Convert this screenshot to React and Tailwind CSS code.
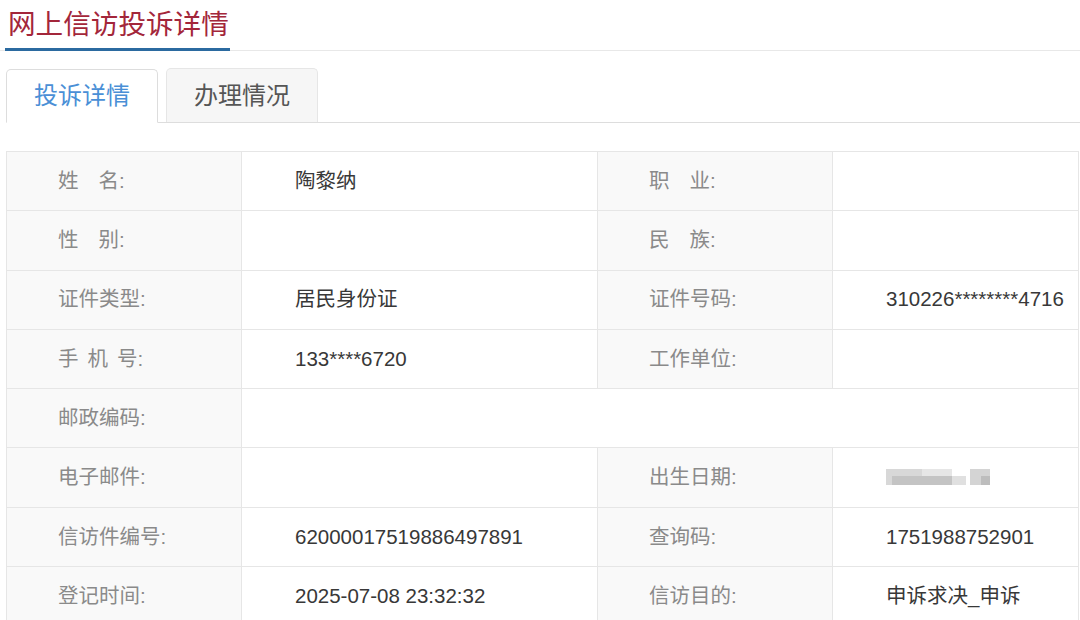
import React from "react";

const font = { fontFamily: '"Liberation Sans", "Noto Sans CJK SC", sans-serif' };

function Label({ children }) {
  return <span className="text-[#8a8a8a]">{children}</span>;
}

function Spaced({ chars, gap }) {
  return (
    <span className="text-[#8a8a8a]">
      {chars.map((c, i) => (
        <span key={i} className={i < chars.length - 1 ? gap : ""}>
          {c}
        </span>
      ))}
      :
    </span>
  );
}

const labelTd = "bg-[#f9f9f9] border border-[#e6e6e6] pl-[51px] text-[20.5px] align-middle";
const valueTd = "bg-white border border-[#e6e6e6] pl-[53px] text-[20.5px] text-[#383838] align-middle";

export default function App() {
  return (
    <div className="w-[1080px] h-[620px] overflow-hidden bg-white" style={font}>
      {/* Title */}
      <div className="flex items-end border-b border-[#e8e8e8] h-[51px]">
        <div className="ml-[5px] w-[225px] border-b-[3px] border-[#2b6aa0] -mb-[1px] pb-[5px] pl-[3px] text-[27.6px] leading-[36px] text-[#a3263a] whitespace-nowrap">
          网上信访投诉详情
        </div>
      </div>

      {/* Tabs */}
      <div className="mt-[18px] ml-[6px] flex items-end gap-[8px] border-b border-[#dddddd] h-[54px]">
        <div className="h-[54px] w-[152px] -mb-[1px] rounded-t-[5px] border border-[#dddddd] border-b-white bg-white flex items-center justify-center text-[24px] text-[#4a8fd6]">
          投诉详情
        </div>
        <div className="h-[54px] w-[152px] rounded-t-[5px] border border-[#e6e6e6] border-b-0 bg-[#f6f6f6] flex items-center justify-center text-[24px] text-[#555]">
          办理情况
        </div>
      </div>

      {/* Table */}
      <table className="ml-[6px] mt-[28px] border-collapse w-[1072px] table-fixed">
        <colgroup>
          <col className="w-[235px]" />
          <col className="w-[356px]" />
          <col className="w-[235px]" />
          <col className="w-[246px]" />
        </colgroup>
        <tbody>
          <tr className="h-[59.3px]">
            <td className={labelTd}><Spaced chars={["姓", "名"]} gap="mr-[20px]" /></td>
            <td className={valueTd}>陶黎纳</td>
            <td className={labelTd}><Spaced chars={["职", "业"]} gap="mr-[20px]" /></td>
            <td className={valueTd}></td>
          </tr>
          <tr className="h-[59.3px]">
            <td className={labelTd}><Spaced chars={["性", "别"]} gap="mr-[20px]" /></td>
            <td className={valueTd}></td>
            <td className={labelTd}><Spaced chars={["民", "族"]} gap="mr-[20px]" /></td>
            <td className={valueTd}></td>
          </tr>
          <tr className="h-[59.3px]">
            <td className={labelTd}><Label>证件类型:</Label></td>
            <td className={valueTd}>居民身份证</td>
            <td className={labelTd}><Label>证件号码:</Label></td>
            <td className={valueTd}>310226********4716</td>
          </tr>
          <tr className="h-[59.3px]">
            <td className={labelTd}><Spaced chars={["手", "机", "号"]} gap="mr-[9px]" /></td>
            <td className={valueTd}>133****6720</td>
            <td className={labelTd}><Label>工作单位:</Label></td>
            <td className={valueTd}></td>
          </tr>
          <tr className="h-[59.3px]">
            <td className={labelTd}><Label>邮政编码:</Label></td>
            <td className={valueTd} colSpan={3}></td>
          </tr>
          <tr className="h-[59.3px]">
            <td className={labelTd}><Label>电子邮件:</Label></td>
            <td className={valueTd}></td>
            <td className={labelTd}><Label>出生日期:</Label></td>
            <td className={valueTd}>
              <div className="relative w-[108px] h-[22px] -ml-[2px]">
                <div className="absolute left-[2px] top-[2px] w-[36px] h-[16px] bg-[#d8d8d8]" />
                <div className="absolute left-[8px] top-[9px] w-[60px] h-[9px] bg-[#c4c4c4]" />
                <div className="absolute left-[38px] top-[2px] w-[30px] h-[7px] bg-[#e6e6e6]" />
                <div className="absolute left-[68px] top-[9px] w-[14px] h-[9px] bg-[#e0e0e0]" />
                <div className="absolute left-[86px] top-[2px] w-[20px] h-[16px] bg-[#d4d4d4]" />
                <div className="absolute left-[97px] top-[9px] w-[9px] h-[9px] bg-[#bdbdbd]" />
              </div>
            </td>
          </tr>
          <tr className="h-[59.3px]">
            <td className={labelTd}><Label>信访件编号:</Label></td>
            <td className={valueTd}>62000017519886497891</td>
            <td className={labelTd}><Label>查询码:</Label></td>
            <td className={valueTd}>1751988752901</td>
          </tr>
          <tr className="h-[59.3px]">
            <td className={labelTd}><Label>登记时间:</Label></td>
            <td className={valueTd}>2025-07-08 23:32:32</td>
            <td className={labelTd}><Label>信访目的:</Label></td>
            <td className={valueTd}>申诉求决_申诉</td>
          </tr>
        </tbody>
      </table>
    </div>
  );
}
